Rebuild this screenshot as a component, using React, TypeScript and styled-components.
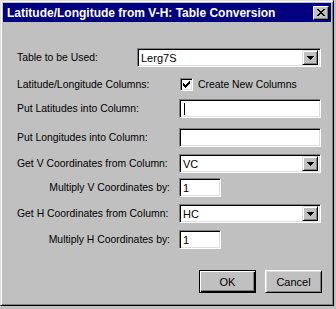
import React from 'react';
import styled, { createGlobalStyle } from 'styled-components';

const GlobalStyle = createGlobalStyle`
    html, body {
        margin: 0;
        padding: 0;
        background: #c0c0c0;
        font-family: "Liberation Sans", Arial, sans-serif;
    }
`;

const StyledWindow = styled.div`
    box-sizing: border-box;
    width: 334px;
    height: 306px;
    background: #c0c0c0;
    border-top: 1px solid #dfdfdf;
    border-left: 1px solid #dfdfdf;
    border-right: 1px solid #000;
    border-bottom: 1px solid #000;
    box-shadow: inset 1px 1px 0 #fff, inset -1px -1px 0 #808080;
    padding: 2px;
    display: flex;
    flex-direction: column;
`;

const StyledTitleBar = styled.div`
    height: 19px;
    background: #000080;
    display: flex;
    flex-direction: row;
    align-items: center;
    justify-content: space-between;
    padding: 0 2px 0 4px;
`;

const StyledTitle = styled.span`
    color: #fff;
    font-weight: 700;
    font-size: 12px;
    white-space: nowrap;
`;

const StyledCloseButton = styled.div`
    box-sizing: border-box;
    width: 16px;
    height: 14px;
    background: #c0c0c0;
    border-top: 1px solid #fff;
    border-left: 1px solid #fff;
    border-right: 1px solid #000;
    border-bottom: 1px solid #000;
    box-shadow: inset -1px -1px 0 #808080;
    display: flex;
    align-items: center;
    justify-content: center;
`;

const StyledForm = styled.div`
    display: flex;
    flex-direction: column;
    padding: 0 0 0 14px;
    font-size: 10.4px;
    color: #000;
`;

const StyledRow = styled.div<{ $top: number }>`
    display: flex;
    flex-direction: row;
    align-items: center;
    height: 19px;
    margin-top: ${(p) => p.$top}px;
`;

const StyledLabel = styled.span<{ $width: number; $right?: boolean; $gap?: number }>`
    width: ${(p) => p.$width}px;
    margin-right: ${(p) => p.$gap ?? 0}px;
    flex-shrink: 0;
    text-align: ${(p) => (p.$right ? 'right' : 'left')};
    white-space: nowrap;
`;

const StyledField = styled.div<{ $width: number }>`
    box-sizing: border-box;
    width: ${(p) => p.$width}px;
    height: 19px;
    background: #fff;
    border-top: 1px solid #808080;
    border-left: 1px solid #808080;
    border-right: 1px solid #fff;
    border-bottom: 1px solid #fff;
    box-shadow: inset 1px 1px 0 #000, inset -1px -1px 0 #dfdfdf;
    display: flex;
    flex-direction: row;
    align-items: center;
    padding-left: 3px;
    font-size: 11px;
`;

const StyledFieldText = styled.span`
    flex: 1;
    white-space: nowrap;
`;

const StyledCaret = styled.span`
    width: 1px;
    height: 12px;
    background: #000;
    margin-left: 1px;
`;

const StyledArrowButton = styled.div`
    box-sizing: border-box;
    width: 16px;
    height: 15px;
    margin-right: 2px;
    background: #c0c0c0;
    border-top: 1px solid #dfdfdf;
    border-left: 1px solid #dfdfdf;
    border-right: 1px solid #000;
    border-bottom: 1px solid #000;
    box-shadow: inset 1px 1px 0 #fff, inset -1px -1px 0 #808080;
    display: flex;
    align-items: center;
    justify-content: center;
`;

const StyledCheckbox = styled.div`
    box-sizing: border-box;
    width: 13px;
    height: 13px;
    background: #fff;
    border-top: 1px solid #808080;
    border-left: 1px solid #808080;
    border-right: 1px solid #fff;
    border-bottom: 1px solid #fff;
    box-shadow: inset 1px 1px 0 #000, inset -1px -1px 0 #dfdfdf;
    display: flex;
    align-items: center;
    justify-content: center;
    margin-left: 1px;
    margin-right: 5px;
`;

const StyledButtons = styled.div`
    display: flex;
    flex-direction: row;
    justify-content: flex-end;
    gap: 9px;
    margin-top: 21px;
    padding-right: 9px;
`;

const StyledButton = styled.div<{ $default?: boolean }>`
    box-sizing: border-box;
    width: 57px;
    height: 23px;
    background: #c0c0c0;
    font-size: 11px;
    display: flex;
    align-items: center;
    justify-content: center;
    border: 1px solid;
    ${(p) =>
        p.$default
            ? 'border-color: #000; box-shadow: inset 1px 1px 0 #fff, inset -1px -1px 0 #000, inset -2px -2px 0 #808080;'
            : 'border-color: #fff #000 #000 #fff; box-shadow: inset 1px 1px 0 #dfdfdf, inset -1px -1px 0 #808080;'}
`;

function Arrow() {
    return (
        <svg width="7" height="4" viewBox="0 0 7 4">
            <path d="M0 0h7v1H0zM1 1h5v1H1zM2 2h3v1H2zM3 3h1v1H3z" fill="#000" />
        </svg>
    );
}

function Select({ value, width }: { value: string; width: number }) {
    return (
        <StyledField $width={width}>
            <StyledFieldText>{value}</StyledFieldText>
            <StyledArrowButton>
                <Arrow />
            </StyledArrowButton>
        </StyledField>
    );
}

export default function App() {
    return (
        <>
            <GlobalStyle />
            <StyledWindow>
                <StyledTitleBar>
                    <StyledTitle>Latitude/Longitude from V-H: Table Conversion</StyledTitle>
                    <StyledCloseButton>
                        <svg width="8" height="7" viewBox="0 0 8 7">
                            <path d="M0 0h2v1H0zM6 0h2v1H6zM1 1h2v1H1zM5 1h2v1H5zM2 2h4v1H2zM3 3h2v1H3zM2 4h4v1H2zM1 5h2v1H1zM5 5h2v1H5zM0 6h2v1H0zM6 6h2v1H6z" fill="#000" />
                        </svg>
                    </StyledCloseButton>
                </StyledTitleBar>
                <StyledForm>
                    <StyledRow $top={26}>
                        <StyledLabel $width={120}>Table to be Used:</StyledLabel>
                        <Select value="Lerg7S" width={184} />
                    </StyledRow>
                    <StyledRow $top={8}>
                        <StyledLabel $width={162}>Latitude/Longitude Columns:</StyledLabel>
                        <StyledCheckbox>
                            <svg width="7" height="7" viewBox="0 0 7 7">
                                <path d="M6 0h1v3H6zM5 1h1v3H5zM4 2h1v3H4zM3 3h1v3H3zM2 4h1v3H2zM1 3h1v3H1zM0 2h1v3H0z" fill="#000" />
                            </svg>
                        </StyledCheckbox>
                        <span>Create New Columns</span>
                    </StyledRow>
                    <StyledRow $top={5}>
                        <StyledLabel $width={162}>Put Latitudes into Column:</StyledLabel>
                        <StyledField $width={142}>
                            <StyledCaret />
                        </StyledField>
                    </StyledRow>
                    <StyledRow $top={10}>
                        <StyledLabel $width={162}>Put Longitudes into Column:</StyledLabel>
                        <StyledField $width={142} />
                    </StyledRow>
                    <StyledRow $top={7}>
                        <StyledLabel $width={162}>Get V Coordinates from Column:</StyledLabel>
                        <Select value="VC" width={142} />
                    </StyledRow>
                    <StyledRow $top={5}>
                        <StyledLabel $width={153} $right $gap={9}>Multiply V Coordinates by:</StyledLabel>
                        <StyledField $width={42}>1</StyledField>
                    </StyledRow>
                    <StyledRow $top={7}>
                        <StyledLabel $width={162}>Get H Coordinates from Column:</StyledLabel>
                        <Select value="HC" width={142} />
                    </StyledRow>
                    <StyledRow $top={7}>
                        <StyledLabel $width={153} $right $gap={9}>Multiply H Coordinates by:</StyledLabel>
                        <StyledField $width={42}>1</StyledField>
                    </StyledRow>
                    <StyledButtons>
                        <StyledButton $default>OK</StyledButton>
                        <StyledButton>Cancel</StyledButton>
                    </StyledButtons>
                </StyledForm>
            </StyledWindow>
        </>
    );
}
